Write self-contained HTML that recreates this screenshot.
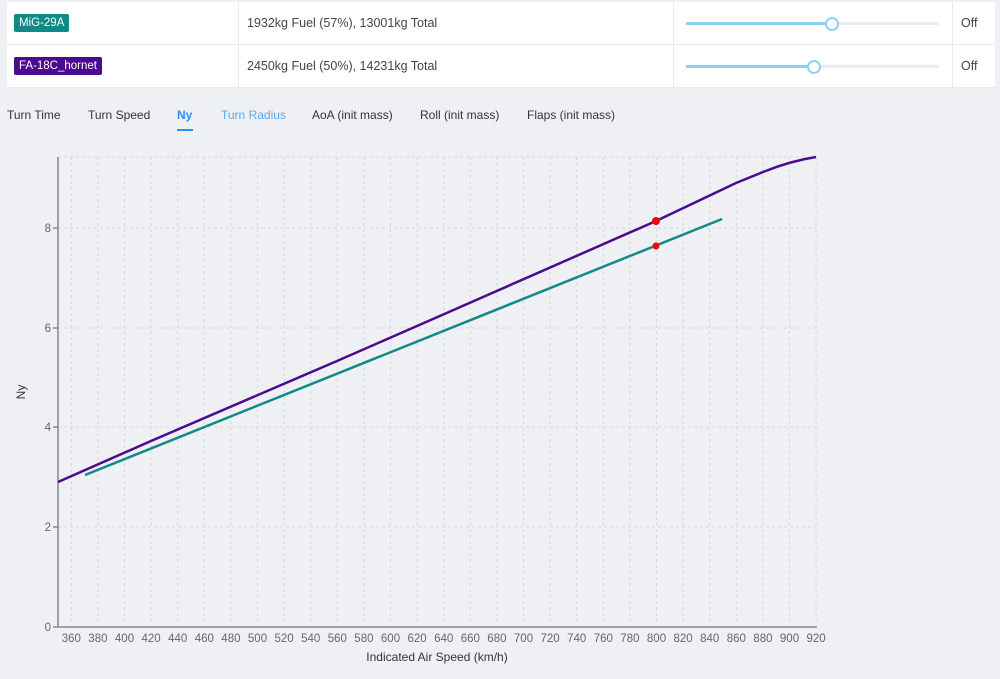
<!DOCTYPE html>
<html><head><meta charset="utf-8"><style>
body{margin:0;width:1000px;height:679px;background:#eef0f3;font-family:"Liberation Sans",sans-serif;overflow:hidden;position:relative}
.tbl{position:absolute;left:7px;top:2px;width:988px;height:85px;background:#fff}
.row{position:absolute;left:0;width:988px;height:42px;border-bottom:1px solid #ececec}
.c{position:absolute;top:0;height:42px;border-left:1px solid #ececec;font-size:12.5px;color:#444;line-height:42px}
.badge{position:absolute;left:7px;top:12px;height:18px;line-height:18px;color:#fff;font-size:11.5px;padding:0 5px;border-radius:2px}
.sl{position:absolute;left:679px;width:253px;height:3px;background:#e9eef2;top:20px}
.sl i{position:absolute;left:0;top:0;height:3px;background:#8fd0f6}
.sl b{position:absolute;top:-5px;width:10px;height:10px;border:2px solid #8fd0f6;background:#fff;border-radius:50%;margin-left:-7px}
.tabs{position:absolute;top:108px;left:0;font-size:12px;color:#333}
.tabs span{position:absolute;white-space:nowrap}
</style></head><body>
<div class="tbl">
 <div class="row" style="top:0">
  <span class="badge" style="background:#118a86">MiG-29A</span>
  <div class="c" style="left:231px;padding-left:8px">1932kg Fuel (57%), 13001kg Total</div>
  <div class="c" style="left:666px;width:1px"></div>
  <div class="sl"><i style="width:146px"></i><b style="left:146px"></b></div>
  <div class="c" style="left:945px;padding-left:8px">Off</div>
 </div>
 <div class="row" style="top:43px">
  <span class="badge" style="background:#4b0a8f">FA-18C_hornet</span>
  <div class="c" style="left:231px;padding-left:8px">2450kg Fuel (50%), 14231kg Total</div>
  <div class="c" style="left:666px;width:1px"></div>
  <div class="sl"><i style="width:128px"></i><b style="left:128px"></b></div>
  <div class="c" style="left:945px;padding-left:8px">Off</div>
 </div>
</div>
<div class="tabs">
 <span style="left:7px">Turn Time</span>
 <span style="left:88px">Turn Speed</span>
 <span style="left:177px;color:#2f8fef;font-weight:bold">Ny</span>
 <span style="left:221px;color:#5aa9ec">Turn Radius</span>
 <span style="left:312px">AoA (init mass)</span>
 <span style="left:420px">Roll (init mass)</span>
 <span style="left:527px">Flaps (init mass)</span>
</div>
<div style="position:absolute;left:177px;top:129px;width:16px;height:2px;background:#2f8fef"></div>
<svg width="1000" height="679" style="position:absolute;left:0;top:0" font-family="Liberation Sans,sans-serif">
<g stroke="#d6d8dc" stroke-dasharray="3,3" stroke-width="1" fill="none">
<path d="M58,157H816M58,228H816M58,328H816M58,427H816M58,527H816"/>
<path d="M71.3,157V627M97.9,157V627M124.5,157V627M151.1,157V627M177.7,157V627M204.3,157V627M230.9,157V627M257.5,157V627M284.1,157V627M310.7,157V627M337.3,157V627M363.9,157V627M390.5,157V627M417.1,157V627M443.7,157V627M470.3,157V627M496.9,157V627M523.5,157V627M550.1,157V627M576.7,157V627M603.3,157V627M629.9,157V627M656.5,157V627M683.1,157V627M709.7,157V627M736.3,157V627M762.9,157V627M789.5,157V627M816.1,157V627"/>
</g>
<g stroke="#888" stroke-width="1.5" fill="none"><path d="M58,157V627H817"/><path d="M53,627H58M53,527H58M53,427H58M53,328H58M53,228H58"/></g>
<g font-size="11.5" fill="#666" text-anchor="end"><text x="51" y="631">0</text><text x="51" y="531">2</text><text x="51" y="431">4</text><text x="51" y="332">6</text><text x="51" y="232">8</text></g>
<g font-size="11.5" fill="#666" text-anchor="middle">
<text x="71.3" y="642">360</text><text x="97.9" y="642">380</text><text x="124.5" y="642">400</text><text x="151.1" y="642">420</text><text x="177.7" y="642">440</text><text x="204.3" y="642">460</text><text x="230.9" y="642">480</text><text x="257.5" y="642">500</text><text x="284.1" y="642">520</text><text x="310.7" y="642">540</text><text x="337.3" y="642">560</text><text x="363.9" y="642">580</text><text x="390.5" y="642">600</text><text x="417.1" y="642">620</text><text x="443.7" y="642">640</text><text x="470.3" y="642">660</text><text x="496.9" y="642">680</text><text x="523.5" y="642">700</text><text x="550.1" y="642">720</text><text x="576.7" y="642">740</text><text x="603.3" y="642">760</text><text x="629.9" y="642">780</text><text x="656.5" y="642">800</text><text x="683.1" y="642">820</text><text x="709.7" y="642">840</text><text x="736.3" y="642">860</text><text x="762.9" y="642">880</text><text x="789.5" y="642">900</text><text x="816.1" y="642">920</text>
</g>
<text x="437" y="661" font-size="12" fill="#333" text-anchor="middle">Indicated Air Speed (km/h)</text>
<text transform="translate(25,392) rotate(-90)" font-size="12" fill="#333" text-anchor="middle">Ny</text>
<path d="M85,475L722,219" stroke="#118a86" stroke-width="2.5" fill="none"/>
<path d="M58,482L151,441L337,361L417,326L656,221L736,183L763,172Q790,161 816,157" stroke="#4b0a8f" stroke-width="2.5" fill="none"/>
<circle cx="656" cy="221" r="4" fill="#f00"/><circle cx="656" cy="246" r="3.5" fill="#f00"/>
</svg>
</body></html>
